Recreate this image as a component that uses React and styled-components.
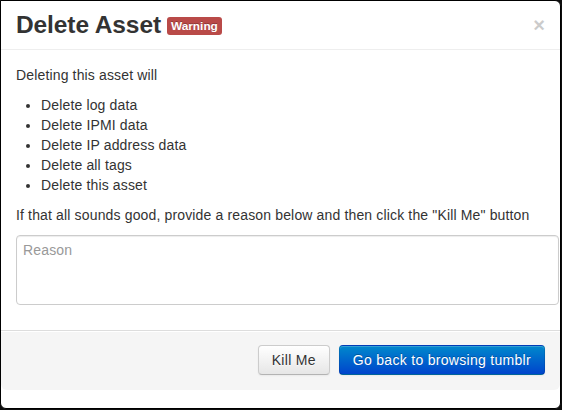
import React from "react";
import styled, { createGlobalStyle } from "styled-components";

const Global = createGlobalStyle`
  html, body { margin: 0; padding: 0; background: #0d0d0d; }
  body { font-family: "Liberation Sans", Arial, sans-serif; font-size: 14px; line-height: 20px; color: #333; }
  * { box-sizing: content-box; }
`;

const Modal = styled.div`
  width: 559px;
  height: 407px;
  background: #fff;
  border: 1px solid #000;
  border-radius: 0 6px 6px 6px;
  display: flex;
  flex-direction: column;
  overflow: hidden;
`;

const Header = styled.div`
  padding: 9px 15px;
  border-bottom: 1px solid #eee;
  display: flex;
  align-items: center;
`;

const Title = styled.h3`
  margin: 0;
  font-size: 24.5px;
  line-height: 30px;
  font-weight: bold;
  color: #333;
  flex: 1;
  display: flex;
  align-items: center;
  letter-spacing: -0.1px;
`;

const Label = styled.span`
  display: inline-block;
  margin-left: 6px;
  margin-top: 2px;
  padding: 2px 4px;
  font-size: 11.844px;
  font-weight: bold;
  line-height: 14px;
  letter-spacing: 0;
  color: #fff;
  background: #b94a48;
  border-radius: 3px;
  text-shadow: 0 -1px 0 rgba(0, 0, 0, 0.25);
`;

const Close = styled.span`
  font-size: 20px;
  font-weight: bold;
  line-height: 20px;
  color: #000;
  opacity: 0.2;
  text-shadow: 0 1px 0 #fff;
  margin-top: 0;
  cursor: pointer;
`;

const Body = styled.div`
  padding: 15px;
  letter-spacing: 0.15px;
`;

const P = styled.p`
  margin: 0 0 10px;
`;

const List = styled.ul`
  margin: 0 0 10px 25px;
  padding: 0;
`;

const TextArea = styled.textarea`
  display: block;
  width: 100%;
  height: 60px;
  margin: 0 0 10px;
  padding: 4px 6px;
  font-family: "Liberation Sans", Arial, sans-serif;
  font-size: 14px;
  line-height: 20px;
  letter-spacing: 0.15px;
  color: #555;
  border: 1px solid #ccc;
  border-radius: 4px;
  box-shadow: inset 0 1px 1px rgba(0, 0, 0, 0.075);
  resize: none;
  outline: none;
  &::placeholder { color: #999; }
`;

const Footer = styled.div`
  padding: 14px 15px 15px;
  background: #f5f5f5;
  border-top: 1px solid #ddd;
  border-radius: 0 0 6px 6px;
  box-shadow: inset 0 1px 0 #fff;
  display: flex;
  justify-content: flex-end;
  gap: 9px;
`;

const Button = styled.button`
  padding: 4px 13px;
  font-family: "Liberation Sans", Arial, sans-serif;
  font-size: 14px;
  line-height: 20px;
  letter-spacing: 0.3px;
  border-radius: 4px;
  cursor: pointer;
  color: ${(p) => (p.$primary ? "#fff" : "#333")};
  text-shadow: ${(p) => (p.$primary ? "0 -1px 0 rgba(0,0,0,.25)" : "0 1px 1px rgba(255,255,255,.75)")};
  background: ${(p) =>
    p.$primary
      ? "linear-gradient(to bottom, #0088cc, #0044cc)"
      : "linear-gradient(to bottom, #ffffff, #e6e6e6)"};
  border: 1px solid ${(p) => (p.$primary ? "rgba(0,0,0,0.1)" : "#ccc")};
  border-bottom-color: ${(p) => (p.$primary ? "rgba(0,0,0,0.25)" : "#b3b3b3")};
  box-shadow: inset 0 1px 0 rgba(255, 255, 255, 0.2), 0 1px 2px rgba(0, 0, 0, 0.05);
`;

export default function App() {
  return (
    <>
      <Global />
      <Modal>
        <Header>
          <Title>
            Delete Asset <Label>Warning</Label>
          </Title>
          <Close>×</Close>
        </Header>
        <Body>
          <P>Deleting this asset will</P>
          <List>
            <li>Delete log data</li>
            <li>Delete IPMI data</li>
            <li>Delete IP address data</li>
            <li>Delete all tags</li>
            <li>Delete this asset</li>
          </List>
          <P>If that all sounds good, provide a reason below and then click the "Kill Me" button</P>
          <TextArea placeholder="Reason" />
        </Body>
        <Footer>
          <Button>Kill Me</Button>
          <Button $primary>Go back to browsing tumblr</Button>
        </Footer>
      </Modal>
    </>
  );
}
